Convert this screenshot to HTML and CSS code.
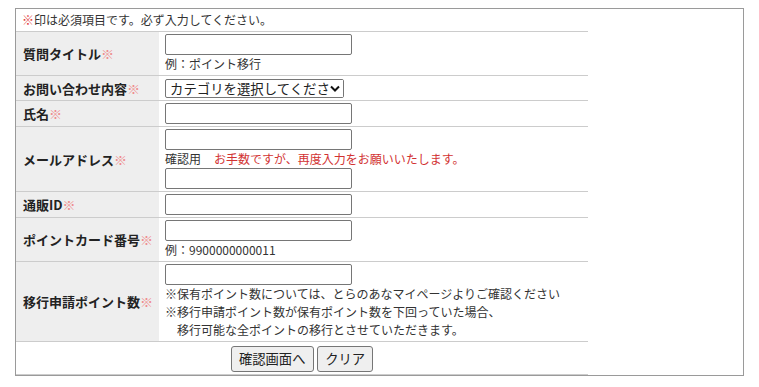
FILE: index.html
```html
<!DOCTYPE html>
<html lang="ja">
<head>
    <meta charset="UTF-8">
    <meta name="viewport" content="width=device-width, initial-scale=1.0">
    <title>ポイント移行のお問い合わせ</title>
    <link rel="stylesheet" href="styles.css">
</head>
<body>
    <div class="form-wrap">
        <form class="inquiry-form">
            <table class="form-table">
                <tr>
                    <td colspan="2" class="note"><span class="req-note">※</span>印は必須項目です。必ず入力してください。</td>
                </tr>
                <tr>
                    <th>質問タイトル<span class="req">※</span></th>
                    <td>
                        <input type="text" class="field" name="title">
                        <div class="hint">例：ポイント移行</div>
                    </td>
                </tr>
                <tr>
                    <th>お問い合わせ内容<span class="req">※</span></th>
                    <td>
                        <span class="select-box">
                            <select class="category" name="category">
                                <option>カテゴリを選択してください</option>
                            </select>
                            <span class="select-arrow">
                                <svg width="10" height="7" viewBox="0 0 10 7"><path d="M1 1.5 5 5.5 9 1.5" fill="none" stroke="#111" stroke-width="2"/></svg>
                            </span>
                        </span>
                    </td>
                </tr>
                <tr>
                    <th>氏名<span class="req">※</span></th>
                    <td><input type="text" class="field" name="name"></td>
                </tr>
                <tr>
                    <th>メールアドレス<span class="req">※</span></th>
                    <td>
                        <input type="text" class="field" name="mail">
                        <div class="hint">確認用<span class="warn">お手数ですが、再度入力をお願いいたします。</span></div>
                        <input type="text" class="field" name="mail_confirm">
                    </td>
                </tr>
                <tr>
                    <th>通販ID<span class="req">※</span></th>
                    <td><input type="text" class="field" name="shop_id"></td>
                </tr>
                <tr>
                    <th>ポイントカード番号<span class="req">※</span></th>
                    <td>
                        <input type="text" class="field" name="card_no">
                        <div class="hint">例：9900000000011</div>
                    </td>
                </tr>
                <tr>
                    <th>移行申請ポイント数<span class="req">※</span></th>
                    <td>
                        <input type="text" class="field" name="points">
                        <div class="hint">※保有ポイント数については、とらのあなマイページよりご確認ください</div>
                        <div class="hint">※移行申請ポイント数が保有ポイント数を下回っていた場合、</div>
                        <div class="hint">　移行可能な全ポイントの移行とさせていただきます。</div>
                    </td>
                </tr>
                <tr>
                    <td colspan="2" class="actions">
                        <button type="submit" class="btn">確認画面へ</button>
                        <button type="reset" class="btn">クリア</button>
                    </td>
                </tr>
            </table>
        </form>
    </div>
</body>
</html>
```

FILE: styles.css
```css
body {
    margin: 8px;
    background-color: #ffffff;
    font-family: "Noto Sans CJK JP", "Noto Sans", sans-serif;
    color: #333333;
}
.form-wrap {
    margin: 0 7px;
    border: 1px solid #9a9a9a;
}
.inquiry-form {
    margin: 0;
}
.form-table {
    width: 572px;
    border-collapse: collapse;
}
.form-table tr {
    border-bottom: 1px solid #cccccc;
}
.form-table th {
    width: 136px;
    padding: 2px 0 2px 7px;
    background-color: #eeeeee;
    text-align: left;
    vertical-align: middle;
    font-size: 13px;
    font-weight: bold;
    color: #222222;
    white-space: nowrap;
}
.form-table td {
    padding: 2px 6px;
    vertical-align: middle;
}
.note {
    font-size: 12px;
    line-height: 18px;
}
.form-table td.note {
    padding-left: 6px;
}
.req-note {
    color: #e23b3b;
}
.req {
    color: #ee8c8c;
}
.field {
    display: block;
    width: 187px;
    height: 21px;
    box-sizing: border-box;
    margin: 0;
    padding: 1px 2px;
    border: 1px solid #767676;
    border-radius: 2px;
    background-color: #ffffff;
    font-size: 13px;
}
.select-box {
    display: block;
    position: relative;
    width: 179px;
    margin-top: 1px;
}
.category {
    display: block;
    width: 179px;
    height: 19px;
    box-sizing: border-box;
    margin: 0;
    padding: 0 12px 0 4px;
    border: 1px solid #767676;
    border-radius: 2px;
    appearance: none;
    -webkit-appearance: none;
    background-color: #ffffff;
    font-family: inherit;
    font-size: 13.4px;
    line-height: 17px;
    color: #222222;
}
.select-arrow {
    position: absolute;
    top: 1px;
    right: 1px;
    bottom: 1px;
    width: 13px;
    display: flex;
    align-items: center;
    justify-content: flex-start;
    background-color: #ffffff;
    pointer-events: none;
}
.hint {
    font-size: 12px;
    line-height: 18px;
    color: #333333;
    white-space: nowrap;
}
.warn {
    margin-left: 13px;
    color: #d23232;
}
.actions {
    text-align: center;
}
.form-table td.actions {
    padding: 2px 0;
}
.btn {
    height: 26px;
    margin: 0;
    padding: 0 7px;
    border: 1px solid #767676;
    border-radius: 3px;
    background-color: #efefef;
    font-family: inherit;
    font-size: 13.33px;
    color: #222222;
    vertical-align: middle;
    cursor: pointer;
}
```
